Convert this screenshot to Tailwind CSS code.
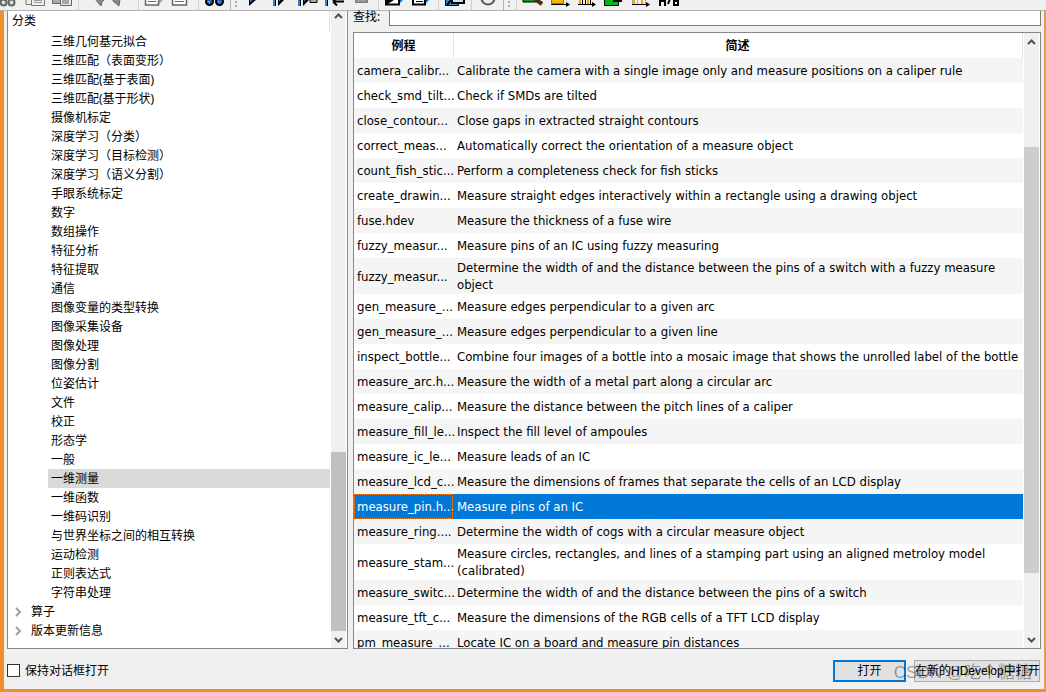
<!DOCTYPE html>
<html lang="zh-CN">
<head>
<meta charset="utf-8">
<title>例程</title>
<script src="https://cdn.jsdelivr.net/npm/@tailwindcss/browser@4"></script>
</head>
<body class="h-screen overflow-hidden flex flex-col bg-[#f0f0f0] text-black text-xs font-['Noto_Sans','Noto_Sans_CJK_SC',sans-serif]">

<header class="h-[11px] shrink-0 flex overflow-hidden border-b border-[#b4b4b4] bg-[#f0f0f0]">
  <div class="flex border-r border-[#b4b4b4]" role="toolbar" aria-label="编辑">
    <button aria-label="剪切"><svg width="22" height="10" viewBox="0 0 22 10" fill="#ddd" stroke="#666" stroke-width="2"><circle cx="3.5" cy="2.5" r="3"/><circle cx="11.500" cy="2.500" r="3"/></svg></button>
    <button aria-label="复制"><svg width="28" height="10" viewBox="22 0 28 10" fill="#eee" stroke="#777"><path d="M26-1V4.500H35V-1"/><path d="M31.500-1V5.500H44.500V-1Z"/><path d="M34 .5h8M34 2.500h8" stroke="#999"/></svg></button>
    <button aria-label="粘贴"><svg width="28" height="10" viewBox="50 0 28 10" fill="#aaa" stroke="#666"><path d="M52.500-1V3.500H62V-1"/><path d="M60.500-1V5.500H71.500V-1Z" fill="#e8e8e8"/><path d="M62 1h7M62 3h7"/></svg></button>
    <span class="w-px bg-[#d0d0d0]"></span>
    <button aria-label="撤销"><svg width="28" height="10" viewBox="79 0 28 10"><path d="M95-1l6 7 1-4 3-3z" fill="#888" stroke="#666"/></svg></button>
    <button aria-label="重做"><svg width="31" height="10" viewBox="107 0 31 10"><path d="M112-1l2 3 5 4 1-7z" fill="#888" stroke="#666"/></svg></button>
    <span class="w-px bg-[#d0d0d0]"></span>
    <button aria-label="激活"><svg width="29" height="10" viewBox="139 0 29 10" fill="#fff" stroke="#666"><path d="M145.500-1V5H158.500V-1Z" stroke-width="1.500"/><path d="M148 1.500h8"/><path d="M158 0h4l-3 4" fill="#888" stroke="#aaa"/></svg></button>
    <button aria-label="停用"><svg width="30" height="10" viewBox="168 0 30 10" fill="#fff" stroke="#666"><path d="M172.500-1V5H186.500V-1Z" stroke-width="1.500"/><path d="M175 1.500h9"/></svg></button>
    <span class="w-px bg-[#d0d0d0]"></span>
    <button aria-label="查找"><svg width="31" height="10" viewBox="199 0 31 10" fill="#1f66c9" stroke="#000" stroke-width="2"><circle cx="209.500" cy="1.500" r="3.500"/><circle cx="219.500" cy="1.500" r="3.500"/><path d="M208 1l2 2M218 1l2 2" stroke="#8abaff" stroke-width="1"/></svg></button>
  </div>
  <div class="flex border-r border-[#b4b4b4]" role="toolbar" aria-label="执行">
    <svg width="10" height="10" viewBox="231 0 10 10" fill="#aaa"><path d="M235 1h2v2h-2zM235 5h2v2h-2z"/></svg>
    <button aria-label="运行"><svg width="26" height="10" viewBox="241 0 26 10"><path d="M249-1h8l-8 7z" fill="#000"/><path d="M250-1h3l-3 4z" fill="#2f7de0"/></svg></button>
    <button aria-label="单步跳过"><svg width="27" height="10" viewBox="267 0 27 10"><path d="M273-1h2v7h-2z" fill="#2f7de0"/><path d="M275-1h1v7h-1zM278-1h7l-7 7z"/><path d="M279-1h2l-2 3z" fill="#2f7de0"/></svg></button>
    <button aria-label="单步跳入"><svg width="28" height="10" viewBox="294 0 28 10"><path d="M298-1h2v7h-2z" fill="#2f7de0"/><path d="M300-1h1v7h-1zM303-1h7l-7 7z"/><path d="M304-1h2l-2 3z" fill="#2f7de0"/><path d="M310 -.5h7v3h-7z" fill="#aaa" stroke="#000"/></svg></button>
    <button aria-label="单步跳出"><svg width="28" height="10" viewBox="322 0 28 10"><path d="M325-1h2v7h-2z" fill="#2f7de0"/><path d="M327-1h1v7h-1z"/><path d="M333 1.500h11M333 1.500l3-3M333 1.500l4 4" stroke="#000" stroke-width="2"/></svg></button>
    <button aria-label="停止"><svg width="28" height="10" viewBox="350 0 28 10"><path d="M355.500-1h12v3.500h-12z" fill="#999" stroke="#777"/></svg></button>
    <span class="w-px bg-[#d0d0d0]"></span>
    <button aria-label="重置程序"><svg width="29" height="10" viewBox="379 0 29 10"><path d="M386-1V4.500h13V-1z" fill="#fff" stroke="#000" stroke-width="2"/><path d="M386 0h8l-8 5z"/><path d="M400-1h4l-4 4z" fill="#1768d8"/></svg></button>
    <button aria-label="重置过程"><svg width="30" height="10" viewBox="408 0 30 10"><path d="M413-1V4.500h12V-1z" fill="#fff" stroke="#000" stroke-width="2"/><path d="M416 1.500h7" stroke="#000"/><path d="M426-1h4l-4 4z" fill="#1768d8"/></svg></button>
    <span class="w-px bg-[#d0d0d0]"></span>
    <button aria-label="性能分析"><svg width="32" height="10" viewBox="439 0 32 10"><path d="M445.500-1V5.500h13V-1z" fill="#3b82d2" stroke="#000"/><path d="M452-1V3h12V-1z" fill="#c8dcf4" stroke="#000" stroke-width="2"/><path d="M447 5l5-6" stroke="#000" stroke-width="2"/></svg></button>
    <span class="w-px bg-[#d0d0d0]"></span>
    <button aria-label="计时"><svg width="31" height="10" viewBox="472 0 31 10"><circle cx="488" cy="-2" r="6.500" fill="#eee" stroke="#555" stroke-width="2"/></svg></button>
  </div>
  <div class="flex" role="toolbar" aria-label="工具">
    <svg width="12" height="10" viewBox="504 0 12 10" fill="#aaa"><path d="M508 1h2v2h-2zM508 5h2v2h-2z"/></svg>
    <span class="w-px bg-[#d0d0d0]"></span>
    <button aria-label="缩放"><svg width="30" height="10" viewBox="517 0 30 10"><path d="M523-1h13v3h-13z" fill="#0b9b18" stroke="#000"/><path d="M535-1l7 5" stroke="#4a2f16" stroke-width="4"/></svg></button>
    <button aria-label="灰度直方图"><svg width="27" height="10" viewBox="547 0 27 10"><path d="M551.500-1V3.500h12V-1z" fill="#f5b400" stroke="#a87000"/><path d="M551 4.500h16" stroke="#000"/><path d="M566 2l4 2.500-4 2.500z"/></svg></button>
    <button aria-label="特征直方图"><svg width="27" height="10" viewBox="574 0 27 10"><path d="M580-1V4M588-1V4" stroke="#f0a800" stroke-width="2"/><path d="M582.500-1V4M585.500-1V4M590.500-1V4M578 4.500h15" stroke="#000"/><path d="M592 2l4 2.500-4 2.500z"/></svg></button>
    <button aria-label="特征检测"><svg width="27" height="10" viewBox="601 0 27 10"><path d="M604.500-1V5.500h14V-1z" fill="#00b51b" stroke="#000"/><path d="M613-1h9v3h-9z"/></svg></button>
    <button aria-label="线剖面"><svg width="27" height="10" viewBox="628 0 27 10"><path d="M634-1V4M642-1V4" stroke="#f0a800" stroke-width="2"/><path d="M632.500-1V4M637.500-1V4M645.500-1V4" stroke="#aaa"/><path d="M632 4.500h15" stroke="#000"/><path d="M646 2l4 2.500-4 2.500z"/></svg></button>
    <button aria-label="OCR"><svg width="27" height="10" viewBox="655 0 27 10" stroke="#000" stroke-width="2" fill="none"><path d="M660-1V6M665-1V6M660 1h5M670-1l-2 5M674 6V-1M678 6V-1M674 1h4M674 5h4"/></svg></button>
  </div>
</header>

<div class="flex-1 min-h-0 flex flex-col border-l-4 border-r-2 border-b-3 border-[#ee8f27] border-r-[#e2a04a]">
  <main class="flex-1 min-h-0 flex gap-[5px] pl-[3px] pr-[3px]">

    <section class="w-[341px] shrink-0 flex bg-white border border-t-0 border-[#828790]">
      <nav class="flex-1 min-w-0 pr-px overflow-hidden" aria-label="分类">
        <h2 class="h-[21px] pl-1 leading-[19px] border-r border-[#e0e0e0] font-normal">分类</h2>
        <ul id="tree"></ul>
      </nav>
      <div class="w-4 flex flex-col items-stretch bg-[#f0f0f0] border-r border-white" aria-hidden="true">
        <svg class="w-4 h-3 shrink-0" viewBox="0 0 16 12" fill="none" stroke="#505050" stroke-width="2"><path d="M4 7l3.500-3.500L11 7"/></svg>
        <span class="flex-[429]"></span>
        <span class="flex-[179] bg-[#c0c0c0]"></span>
        <svg class="w-4 h-[17px] shrink-0" viewBox="0 0 16 17" fill="none" stroke="#505050" stroke-width="2"><path d="M4 7l3.500 3.500L11 7"/></svg>
      </div>
    </section>

    <div class="flex-1 min-w-0 flex flex-col">
      <div class="h-[21px] shrink-0 flex">
        <label for="find" class="w-9 leading-3">查找:</label>
        <input id="find" type="text" class="flex-1 h-[15px] min-w-0 px-1 bg-white border border-t-0 border-[#7a7a7a] outline-none">
      </div>
      <section class="flex-1 min-h-0 flex bg-white border border-[#828790]">
        <div class="flex-1 min-w-0 overflow-hidden">
          <table class="w-full table-fixed border-separate border-spacing-0 text-[13px] leading-[17px] font-['DejaVu_Sans_Condensed','Noto_Sans_CJK_SC',sans-serif]">
            <colgroup><col class="w-[99px]"><col></colgroup>
            <thead>
              <tr class="h-[25px] text-xs">
                <th class="p-0 font-bold shadow-[1px_0_0_#e5e5e5]">例程</th>
                <th class="p-0 font-bold border-r border-[#e5e5e5]">简述</th>
              </tr>
            </thead>
            <tbody id="rows"></tbody>
          </table>
        </div>
        <div class="w-[17px] flex flex-col bg-[#f0f0f0] border-x border-white" aria-hidden="true">
          <svg class="w-4 h-[17px] shrink-0" viewBox="0 0 16 17" fill="none" stroke="#505050" stroke-width="2"><path d="M4 11l3.500-3.500L11 11"/></svg>
          <span class="flex-[97]"></span>
          <span class="flex-[426] bg-[#cdcdcd]"></span>
          <span class="flex-[58]"></span>
          <svg class="w-4 h-[17px] shrink-0" viewBox="0 0 16 17" fill="none" stroke="#505050" stroke-width="2"><path d="M4 7l3.500 3.500L11 7"/></svg>
        </div>
      </section>
    </div>
  </main>

  <footer class="relative h-10 shrink-0 flex items-center justify-between pl-[3px] pr-1 pt-[3px]">
    <label class="flex items-center gap-[5px]">
      <input type="checkbox" class="appearance-none size-[13px] bg-white border border-[#333]">保持对话框打开
    </label>
    <div class="flex gap-2">
      <button class="w-[73px] h-[22px] bg-[#e1e1e1] border-2 border-[#0078d7] leading-4">打开</button>
      <button class="w-[126px] h-[22px] bg-[#e1e1e1] border border-[#adadad] whitespace-nowrap leading-4 font-['Liberation_Sans','Noto_Sans_CJK_SC',sans-serif]">在新的HDevelop中打开</button>
    </div>
    <span class="absolute right-3 top-3 text-[17px] leading-6 text-black/35 whitespace-nowrap pointer-events-none font-['Liberation_Sans','Noto_Sans_CJK_SC',sans-serif]">CSDN @吃个糖糖</span>
  </footer>
</div>

<script>
const categories = ['三维几何基元拟合','三维匹配（表面变形）','三维匹配(基于表面)','三维匹配(基于形状)','摄像机标定','深度学习（分类）','深度学习（目标检测）','深度学习（语义分割）','手眼系统标定','数字','数组操作','特征分析','特征提取','通信','图像变量的类型转换','图像采集设备','图像处理','图像分割','位姿估计','文件','校正','形态学','一般','一维测量','一维函数','一维码识别','与世界坐标之间的相互转换','运动检测','正则表达式','字符串处理'];
const tree = document.getElementById('tree');
for (const name of categories) {
  const selected = name === '一维测量';
  tree.insertAdjacentHTML('beforeend', `<li class="ml-10 pl-[3px] h-[19px] leading-[19px] whitespace-nowrap ${selected ? 'bg-[#d9d9d9]' : ''}">${name}</li>`);
}
for (const name of ['算子', '版本更新信息']) {
  tree.insertAdjacentHTML('beforeend', `<li class="h-[19px] leading-[19px] flex items-center pl-[6px] gap-[9px]"><svg width="8" height="10" viewBox="0 0 8 10" fill="none" stroke="#a0a0a0" stroke-width="2"><path d="M2 1l4 4-4 4"/></svg>${name}</li>`);
}
const examples = [
  ['camera_calibr...', 'Calibrate the camera with a single image only and measure positions on a caliper rule'],
  ['check_smd_tilt...', 'Check if SMDs are tilted'],
  ['close_contour...', 'Close gaps in extracted straight contours'],
  ['correct_meas...', 'Automatically correct the orientation of a measure object'],
  ['count_fish_stic...', 'Perform a completeness check for fish sticks'],
  ['create_drawin...', 'Measure straight edges interactively within a rectangle using a drawing object'],
  ['fuse.hdev', 'Measure the thickness of a fuse wire'],
  ['fuzzy_measur...', 'Measure pins of an IC using fuzzy measuring'],
  ['fuzzy_measur...', 'Determine the width of and the distance between the pins of a switch with a fuzzy measure<br>object'],
  ['gen_measure_...', 'Measure edges perpendicular to a given arc'],
  ['gen_measure_...', 'Measure edges perpendicular to a given line'],
  ['inspect_bottle...', 'Combine four images of a bottle into a mosaic image that shows the unrolled label of the bottle'],
  ['measure_arc.h...', 'Measure the width of a metal part along a circular arc'],
  ['measure_calip...', 'Measure the distance between the pitch lines of a caliper'],
  ['measure_fill_le...', 'Inspect the fill level of ampoules'],
  ['measure_ic_le...', 'Measure leads of an IC'],
  ['measure_lcd_c...', 'Measure the dimensions of frames that separate the cells of an LCD display'],
  ['measure_pin.h...', 'Measure pins of an IC'],
  ['measure_ring....', 'Determine the width of cogs with a circular measure object'],
  ['measure_stam...', 'Measure circles, rectangles, and lines of a stamping part using an aligned metroloy model<br>(calibrated)'],
  ['measure_switc...', 'Determine the width of and the distance between the pins of a switch'],
  ['measure_tft_c...', 'Measure the dimensions of the RGB cells of a TFT LCD display'],
  ['pm_measure_...', 'Locate IC on a board and measure pin distances'],
];
const rows = document.getElementById('rows');
for (const [file, text] of examples) {
  const selected = file === 'measure_pin.h...';
  rows.insertAdjacentHTML('beforeend', `<tr class="h-[25px] whitespace-nowrap ${selected ? 'bg-[#0078d7] text-white' : 'odd:bg-[#f5f5f5]'}"><td class="py-0 pl-[3px] pr-0 ${selected ? 'outline outline-dotted outline-[#ff8728] -outline-offset-1' : ''}">${file}</td><td class="py-px pl-1 pr-0">${text}</td></tr>`);
}
</script>
</body>
</html>
